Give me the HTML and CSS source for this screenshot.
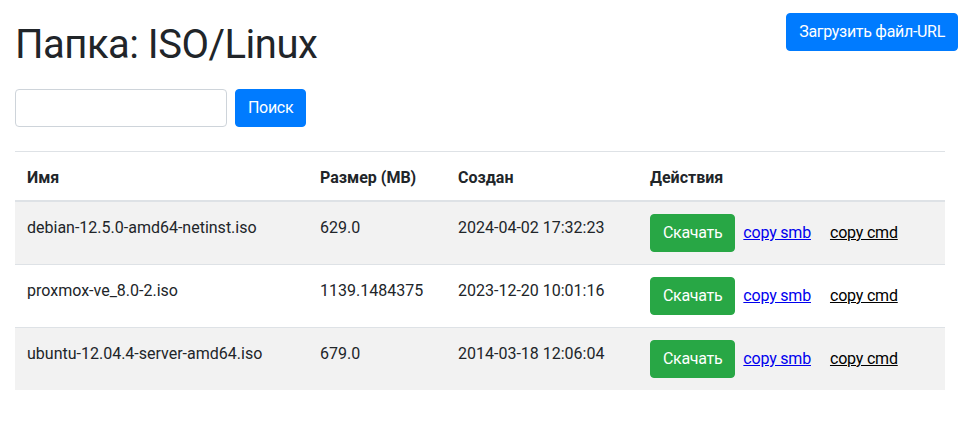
FILE: index.html
```html
<!DOCTYPE html>
<html lang="ru">
<head>
<meta charset="utf-8">
<title>Папка: ISO/Linux</title>
<link rel="stylesheet" href="styles.css">
</head>
<body>
<a class="btn btn-primary upload" href="#">Загрузить файл-URL</a>
<div class="page">
  <h1 class="title">Папка: ISO/Linux</h1>
  <form class="search">
    <input class="search-input" type="text">
    <button class="btn btn-primary" type="button">Поиск</button>
  </form>
  <table class="files">
    <colgroup>
      <col class="c-name"><col class="c-size"><col class="c-date"><col>
    </colgroup>
    <thead>
      <tr><th>Имя</th><th>Размер (MB)</th><th>Создан</th><th>Действия</th></tr>
    </thead>
    <tbody>
      <tr>
        <td>debian-12.5.0-amd64-netinst.iso</td><td>629.0</td><td>2024-04-02 17:32:23</td>
        <td class="actions"><a class="btn btn-success" href="#">Скачать</a><a class="link-smb" href="#">copy smb</a><a class="link-cmd" href="#">copy cmd</a></td>
      </tr>
      <tr>
        <td>proxmox-ve_8.0-2.iso</td><td>1139.1484375</td><td>2023-12-20 10:01:16</td>
        <td class="actions"><a class="btn btn-success" href="#">Скачать</a><a class="link-smb" href="#">copy smb</a><a class="link-cmd" href="#">copy cmd</a></td>
      </tr>
      <tr>
        <td>ubuntu-12.04.4-server-amd64.iso</td><td>679.0</td><td>2014-03-18 12:06:04</td>
        <td class="actions"><a class="btn btn-success" href="#">Скачать</a><a class="link-smb" href="#">copy smb</a><a class="link-cmd" href="#">copy cmd</a></td>
      </tr>
    </tbody>
  </table>
</div>
</body>
</html>
```

FILE: styles.css
```css
* { box-sizing: border-box; }
body {
  margin: 0;
  font-family: Roboto, "Noto Sans", sans-serif;
  font-size: 16px;
  line-height: 1.5;
  color: #212529;
  background: #fff;
}
.page {
  padding: 21px 20px 0 15px;
}
.title {
  margin: 0 0 20px;
  font-size: 40px;
  font-weight: 400;
  line-height: 48px;
  letter-spacing: -0.5px;
}
.btn {
  display: inline-block;
  height: 38px;
  padding: 6px 12px;
  font: inherit;
  line-height: 24px;
  letter-spacing: -0.3px;
  border: 1px solid transparent;
  border-radius: 4px;
  color: #fff;
  text-decoration: none;
  cursor: pointer;
}
.btn-primary { background: #007bff; border-color: #007bff; }
.btn-success { background: #28a745; border-color: #28a745; }
.upload {
  position: absolute;
  top: 13px;
  right: 7px;
}
.search {
  display: flex;
  gap: 8px;
  margin: 0 0 24px;
}
.search-input {
  width: 212px;
  height: 38px;
  padding: 6px 12px;
  font: inherit;
  border: 1px solid #ced4da;
  border-radius: 4px;
}
.files {
  width: 930px;
  border-collapse: collapse;
}
.c-name { width: 293px; }
.c-size { width: 138px; }
.c-date { width: 192px; }
.files th, .files td {
  padding: 14px 12px 10px;
  text-align: left;
  vertical-align: top;
  border-top: 1px solid #dee2e6;
}
.files th {
  font-weight: 700;
  border-bottom: 2px solid #dee2e6;
}
.files td.actions { padding: 12px; }
.files tbody tr:nth-child(odd) { background: #f2f2f2; }
.actions a { vertical-align: middle; }
.link-smb { margin-left: 8px; color: #0000ee; text-decoration: underline; letter-spacing: -0.2px; }
.link-cmd { margin-left: 19px; color: #000; text-decoration: underline; letter-spacing: -0.2px; }
```
